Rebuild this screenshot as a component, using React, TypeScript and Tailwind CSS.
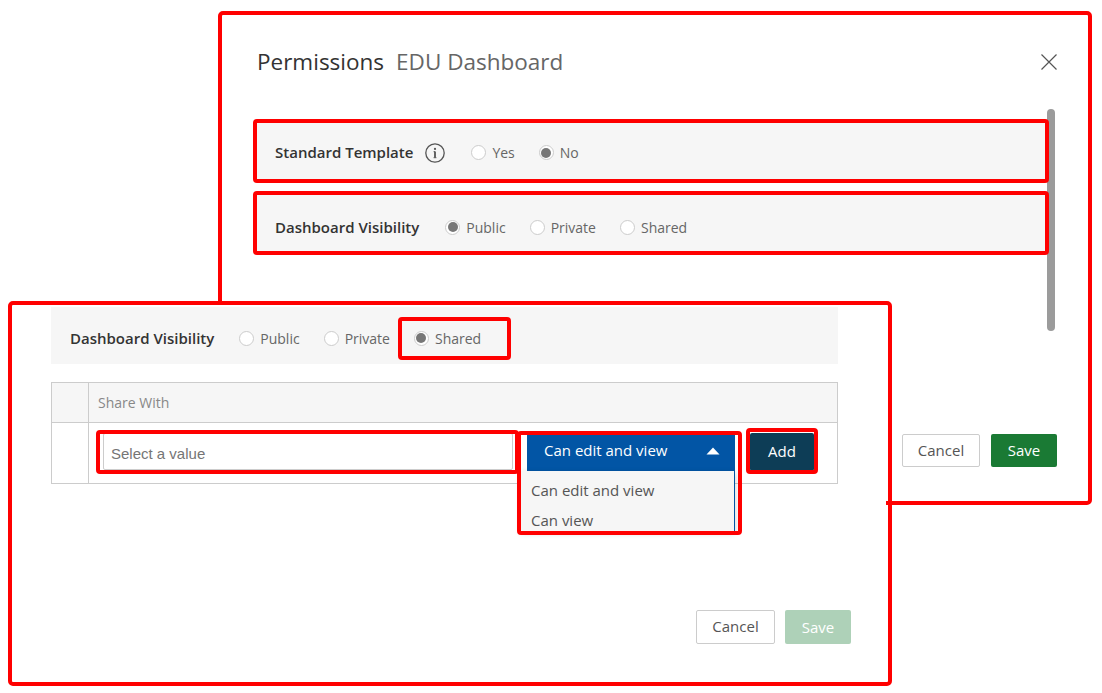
import React from 'react';

const font = { fontFamily: '"Open Sans", sans-serif' };

const Radio: React.FC<{ label: string; checked?: boolean; className?: string }> = ({ label, checked, className }) => (
  <label className={`flex items-center text-[14px] text-[#666] ${className ?? ''}`}>
    <span className="mr-[6px] flex h-[15px] w-[15px] items-center justify-center rounded-full border border-[#ccc] bg-white">
      {checked && <span className="h-[10px] w-[10px] rounded-full bg-[#777]" />}
    </span>
    {label}
  </label>
);

const InfoIcon = () => (
  <svg width="20" height="20" viewBox="0 0 20 20" fill="none" className="ml-[12px] shrink-0">
    <circle cx="10" cy="10" r="9.2" stroke="#555" strokeWidth="1.3" />
    <circle cx="10" cy="5.9" r="1.1" fill="#555" />
    <path d="M10 8.6v6" stroke="#555" strokeWidth="1.8" />
    <path d="M8.6 8.7H10M8.6 14.7h2.8" stroke="#555" strokeWidth="1" />
  </svg>
);

const CloseIcon = () => (
  <svg width="16" height="16" viewBox="0 0 16 16" fill="none">
    <path d="M0.5 0.5l15 15M15.5 0.5l-15 15" stroke="#555" strokeWidth="1.2" />
  </svg>
);

const Highlight: React.FC<{ className: string }> = ({ className }) => (
  <span className={`pointer-events-none absolute rounded-[4px] border-4 border-[#f00] ${className}`} />
);

const PermissionsPanel = () => (
  <div className="absolute left-[218px] top-[11px] flex h-[494px] w-[874px] flex-col rounded-[5px] border-4 border-[#f00] bg-white">
    <div className="flex items-center justify-between pl-[35px] pr-[31px] pt-[30px]">
      <div className="flex text-[22.5px] leading-[34px]">
        <span className="text-[#333]">Permissions</span>
        <span className="ml-[12px] text-[#666]">EDU Dashboard</span>
      </div>
      <CloseIcon />
    </div>

    <div className="relative ml-[31px] mt-[40px] flex w-[796px] flex-col gap-[8px]">
      {/* scrollbar sits under the red outlines */}
      <span className="absolute left-[794px] top-[-10px] h-[222px] w-[8px] rounded-full bg-[#9b9b9b]" />
      <div className="relative flex h-[64px] items-center rounded-[4px] border-4 border-[#f00] bg-[#f6f6f6] pl-[18px] pt-[3px]">
        <span className="text-[15px] font-semibold text-[#333]">Standard Template</span>
        <InfoIcon />
        <Radio label="Yes" className="ml-[26px]" />
        <Radio label="No" checked className="ml-[24px]" />
      </div>
      <div className="relative flex h-[64px] items-center rounded-[4px] border-4 border-[#f00] bg-[#f6f6f6] pl-[18px] pt-[8px]">
        <span className="text-[15px] font-semibold text-[#333]">Dashboard Visibility</span>
        <Radio label="Public" checked className="ml-[26px]" />
        <Radio label="Private" className="ml-[24px]" />
        <Radio label="Shared" className="ml-[24px]" />
      </div>
    </div>

    <div className="mt-auto flex justify-end gap-[11px] pb-[34px] pr-[31px]">
      <button className="h-[33px] w-[78px] rounded-[2px] border border-[#ccc] bg-white text-[15px] text-[#555]">Cancel</button>
      <button className="h-[33px] w-[66px] rounded-[2px] bg-[#1a7a34] text-[15px] text-white">Save</button>
    </div>
  </div>
);

const SharePanel = () => (
  <div className="absolute left-[8px] top-[301px] flex h-[385px] w-[884px] flex-col rounded-[5px] border-4 border-[#f00] bg-white pl-[39px] pt-[2px]">
    <div className="flex h-[57px] w-[787px] items-center bg-[#f6f6f6] pl-[19px] pt-[5px]">
      <span className="text-[15px] font-semibold text-[#333]">Dashboard Visibility</span>
      <Radio label="Public" className="ml-[25px]" />
      <Radio label="Private" className="ml-[24px]" />
      <div className="relative ml-[24px]">
        <Radio label="Shared" checked />
        <Highlight className="-left-[16px] -top-[11px] h-[43px] w-[113px]" />
      </div>
    </div>

    <div className="mt-[18px] w-[787px] border border-[#ccc]">
      <div className="flex h-[40px] border-b border-[#ccc] bg-[#f6f6f6]">
        <div className="w-[37px] border-r border-[#ccc]" />
        <div className="flex items-center pl-[9px] text-[14px] text-[#888]">Share With</div>
      </div>
      <div className="flex h-[60px]">
        <div className="w-[37px] border-r border-[#ccc]" />
        <div className="flex items-start pl-[14px] pt-[10px]">
          <div className="relative h-[37px] w-[410px] rounded-[2px] border border-[#ccc] bg-white pl-[7px] text-[15px] leading-[39px] text-[#757575]" style={{ fontFamily: '"Liberation Sans", sans-serif' }}>
            Select a value
            <Highlight className="-left-[8px] -top-[4px] h-[44px] w-[423px]" />
          </div>
          <div className="relative ml-[14px] mt-[2px] h-[36px] w-[208px]">
            <div className="flex h-[36px] items-center justify-between bg-[#0255a5] pb-[5px] pl-[17px] pr-[15px] text-[15px] text-white">
              Can edit and view
              <svg width="14" height="8" viewBox="0 0 14 8"><path d="M7 0.5L13.5 7.5H0.5z" fill="#fff" /></svg>
            </div>
            <div className="absolute -left-[6px] top-[36px] h-[60px] w-[214px] border-r border-[#0255a5] bg-[#f6f6f6] pl-[10px] pt-[4px] text-[15px] leading-[30px] text-[#555] shadow-[0_2px_6px_rgba(0,0,0,0.2)]">
              <div>Can edit and view</div>
              <div>Can view</div>
            </div>
            <Highlight className="-left-[10px] -top-[4px] h-[104px] w-[225px]" />
          </div>
          <div className="relative ml-[15px] h-[38px] w-[64px]">
            <button className="h-[38px] w-[64px] rounded-[2px] bg-[#0d3d56] pb-[2px] text-[15px] text-white">Add</button>
            <Highlight className="-left-[4px] -top-[5px] h-[46px] w-[72px]" />
          </div>
        </div>
      </div>
    </div>

    <div className="mt-[126px] flex justify-end gap-[10px] pr-[37px]">
      <button className="h-[34px] w-[79px] rounded-[2px] border border-[#ccc] bg-white pb-[2px] text-[15px] text-[#555]">Cancel</button>
      <button className="h-[34px] w-[66px] rounded-[2px] bg-[#aed1b8] text-[15px] text-white">Save</button>
    </div>
  </div>
);

export default function App() {
  return (
    <div className="relative h-[693px] w-[1102px] overflow-hidden bg-white" style={font}>
      <PermissionsPanel />
      <SharePanel />
      {/* end of the back panel's border, drawn over the front panel */}
      <span className="absolute left-[886px] top-[501px] h-[4px] w-[3px] bg-[#f00]" />
    </div>
  );
}
